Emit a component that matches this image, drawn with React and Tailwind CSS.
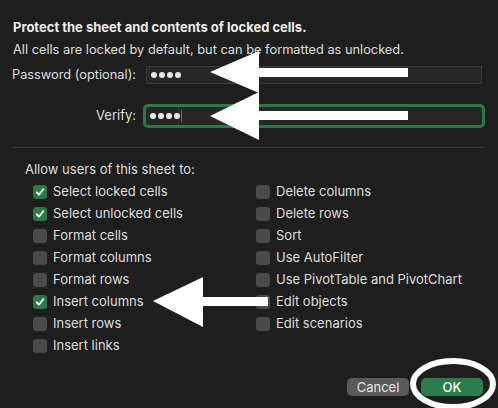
import React from 'react';

const left = [
  { label: 'Select locked cells', on: true },
  { label: 'Select unlocked cells', on: true },
  { label: 'Format cells' },
  { label: 'Format columns' },
  { label: 'Format rows' },
  { label: 'Insert columns', on: true },
  { label: 'Insert rows' },
  { label: 'Insert links' },
];

const right = [
  { label: 'Delete columns' },
  { label: 'Delete rows' },
  { label: 'Sort' },
  { label: 'Use AutoFilter' },
  { label: 'Use PivotTable and PivotChart' },
  { label: 'Edit objects' },
  { label: 'Edit scenarios' },
];

function Check({ label, on }) {
  return (
    <div className="flex items-center h-[22px]">
      <div
        className={`w-[14px] h-[14px] rounded-[3px] flex items-center justify-center ${
          on ? 'bg-[#2a7b48]' : 'bg-[#4a4a4a]'
        }`}
      >
        {on && (
          <svg width="10" height="10" viewBox="0 0 10 10">
            <path d="M1.8 5.3 L4 7.6 L8.3 2.2" fill="none" stroke="white" strokeWidth="1.8" strokeLinecap="round" strokeLinejoin="round" />
          </svg>
        )}
      </div>
      <span className="ml-[6px] text-[13px] text-[#dedede] whitespace-nowrap">{label}</span>
    </div>
  );
}

function Dots() {
  return (
    <div className="flex gap-[2px] ml-[4px]">
      {[0, 1, 2, 3].map((i) => (
        <span key={i} className="w-[6px] h-[6px] rounded-full bg-[#e8e8e8]" />
      ))}
    </div>
  );
}

export default function App() {
  return (
    <div
      className="relative w-[498px] h-[408px] overflow-hidden bg-[#1e1e1e] pt-[19px] px-[13px] text-[#dedede]"
      style={{ fontFamily: 'Inter, "Liberation Sans", sans-serif' }}
    >
      <div className="h-[16px] leading-[16px] text-[13px] font-bold text-[#ececec]">
        Protect the sheet and contents of locked cells.
      </div>
      <div className="mt-[7px] h-[16px] leading-[16px] text-[12.8px] whitespace-nowrap">
        All cells are locked by default, but can be formatted as unlocked.
      </div>

      <div className="mt-[8px] flex items-center h-[18px]">
        <div className="w-[123px] flex justify-end">
          <span className="text-[12.8px] whitespace-nowrap">Password (optional):</span>
        </div>
        <div className="ml-[10px] w-[336px] h-[18px] bg-[#272727] border border-[#3c3c3c] flex items-center">
          <Dots />
        </div>
      </div>

      <div className="mt-[20px] flex items-center h-[24px]">
        <div className="w-[123px] flex justify-end">
          <span className="text-[13px] whitespace-nowrap">Verify:</span>
        </div>
        <div className="ml-[7px] w-[342px] h-[24px] rounded-[5px] border-[3px] border-[#2b7a45] bg-[#272727] flex items-center">
          <Dots />
          <span className="ml-[1px] w-px h-[12px] bg-[#3f8a52]" />
        </div>
      </div>

      <div className="mt-[19px] w-[472px] h-px bg-[#383838]" />

      <div className="mt-[13px] ml-[12px] h-[16px] leading-[16px] text-[13px]">
        Allow users of this sheet to:
      </div>

      <div className="mt-[4px] flex">
        <div className="ml-[20px] w-[223px] flex flex-col">
          {left.map((c) => (
            <Check key={c.label} {...c} />
          ))}
        </div>
        <div className="flex flex-col">
          {right.map((c) => (
            <Check key={c.label} {...c} />
          ))}
        </div>
      </div>

      <div className="mt-[21px] w-[470px] flex justify-end gap-[12px]">
        <button className="w-[62px] h-[18px] rounded-[5px] bg-[#5a5a5a] text-[13px] leading-[18px] text-[#e6e6e6]">
          Cancel
        </button>
        <button className="w-[62px] h-[18px] rounded-[5px] bg-[#2a7d4a] text-[13px] font-medium leading-[18px] text-white">
          OK
        </button>
      </div>

      <svg className="absolute inset-0 pointer-events-none" width="498" height="408" viewBox="0 0 498 408">
        <polygon fill="white" points="210,72 259,51 259,68 408,68 408,77 259,77 259,93" />
        <polygon fill="white" points="210,116 259,92 259,111 408,111 408,120 259,120 259,140" />
        <polygon fill="white" points="153,301 203,277 203,297 268,297 268,306 203,306 203,327" />
        <ellipse cx="453" cy="384" rx="40" ry="23" fill="none" stroke="white" strokeWidth="6" />
      </svg>
    </div>
  );
}
